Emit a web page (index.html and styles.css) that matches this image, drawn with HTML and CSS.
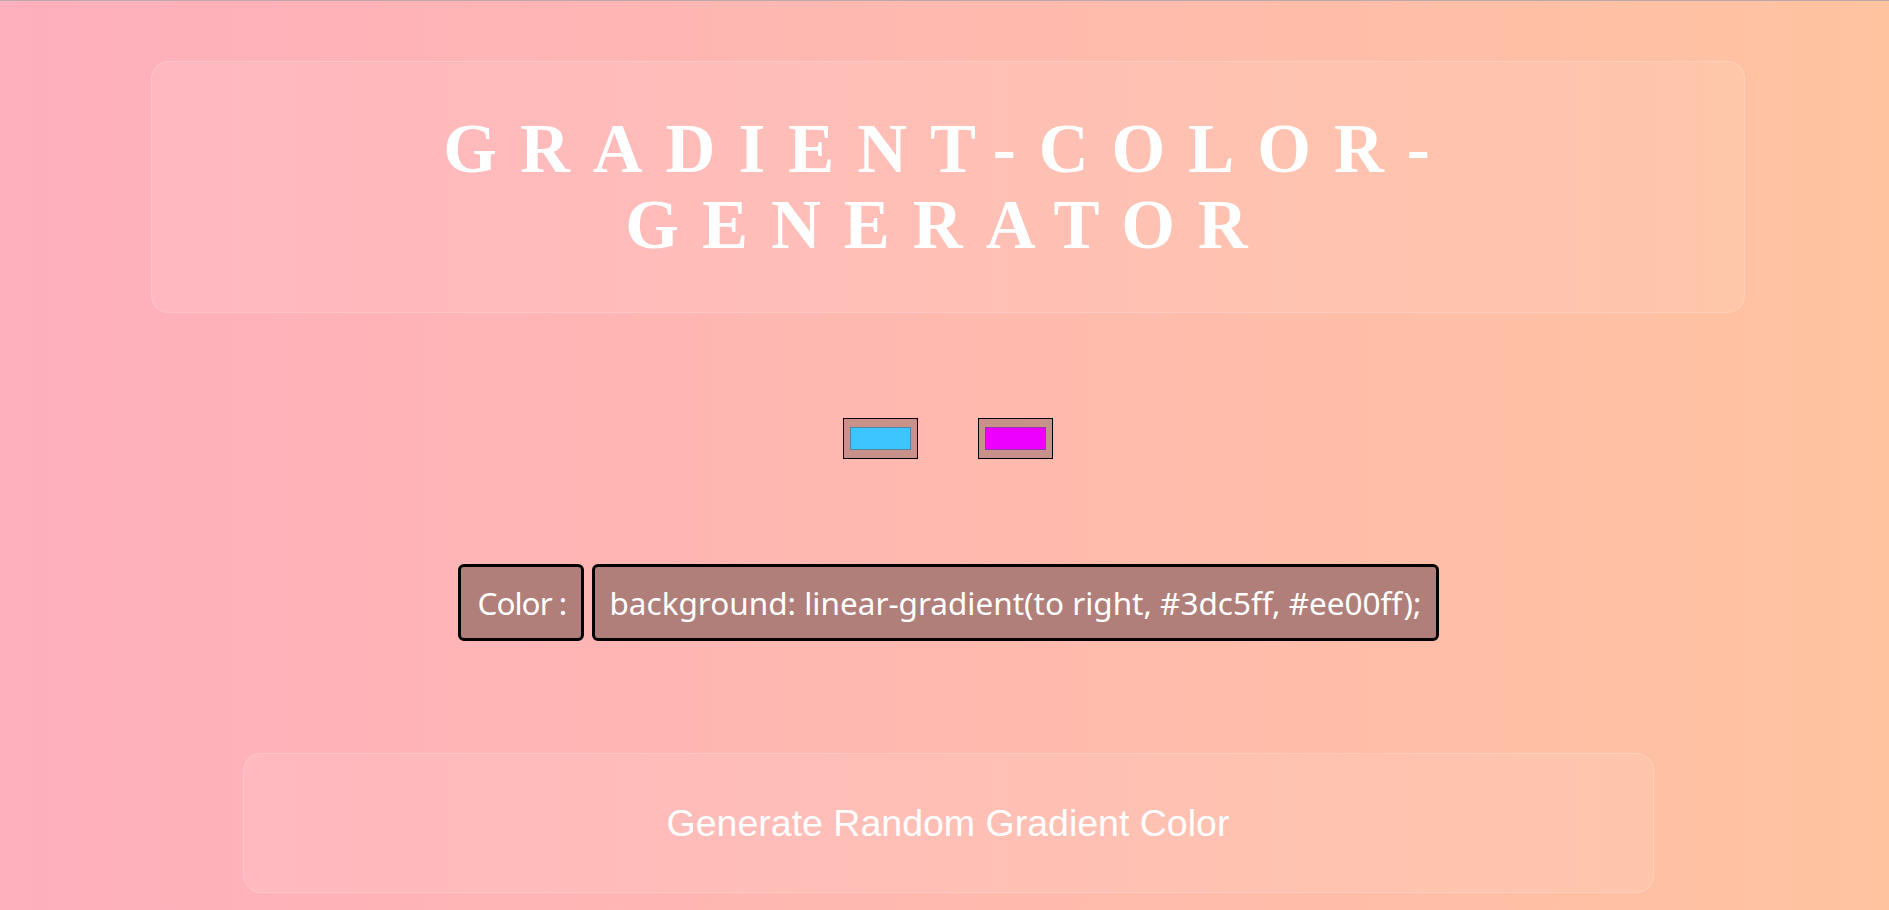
FILE: index.html
```html
<!DOCTYPE html>
<html lang="en">
<head>
<meta charset="utf-8">
<title>Gradient Color Generator</title>
<link rel="stylesheet" href="styles.css">
</head>
<body>
  <main class="page">
    <header class="title-card">
      <h1 class="title">Gradient-Color-Generator</h1>
    </header>

    <section class="pickers">
      <div class="picker"><span class="swatch swatch-a"></span></div>
      <div class="picker"><span class="swatch swatch-b"></span></div>
    </section>

    <section class="code-row">
      <div class="code-box code-label">Color :</div>
      <div class="code-box code-value">background: linear-gradient(to right, #3dc5ff, #ee00ff);</div>
    </section>

    <button class="generate" type="button">Generate Random Gradient Color</button>
  </main>
</body>
</html>
```

FILE: styles.css
```css
html {
  border-top: 1px solid #bba9ac;
}

body {
  margin: 0;
  min-height: 909px;
  background: linear-gradient(to right, #ffafbd, #ffc3a0);
  font-family: "Liberation Sans", Arial, sans-serif;
  color: #fff;
}

.page {
  display: flex;
  flex-direction: column;
  align-items: center;
  padding-top: 60px;
  padding-left: 7px;
}

.title-card {
  box-sizing: border-box;
  width: 1594px;
  height: 252px;
  display: flex;
  align-items: center;
  justify-content: center;
  background: rgba(255, 255, 255, 0.09);
  border: 1px solid rgba(255, 255, 255, 0.18);
  border-radius: 18px;
}

.title {
  margin: 0;
  max-width: 1300px;
  font-family: "Liberation Serif", "Times New Roman", serif;
  font-weight: bold;
  font-size: 69px;
  line-height: 76px;
  letter-spacing: 23px;
  text-transform: uppercase;
  text-align: center;
  color: #fff;
}

.pickers {
  display: flex;
  gap: 60px;
  margin-top: 105px;
}

.picker {
  display: block;
  padding: 8px 6px;
  background: #c8928b;
  border: 1px solid #000;
}

.swatch {
  display: block;
  box-sizing: border-box;
  width: 61px;
  height: 23px;
  border: 1px solid rgba(90, 90, 110, 0.6);
}

.swatch-a { background: #3dc5ff; }
.swatch-b { background: #ee00ff; }

.code-row {
  display: flex;
  gap: 8px;
  margin-top: 105px;
}

.code-box {
  box-sizing: border-box;
  height: 77px;
  display: flex;
  align-items: center;
  background: #b07f7a;
  border: 3px solid #000;
  border-radius: 6px;
  font-family: "Noto Sans", "DejaVu Sans", sans-serif;
  font-size: 31.5px;
  color: #fff;
  white-space: nowrap;
}

.code-label {
  width: 126px;
  padding: 0 0 0 17px;
  letter-spacing: -1px;
}

.code-value {
  width: 847px;
  padding: 0 0 0 15px;
}

.generate {
  box-sizing: border-box;
  width: 1411px;
  height: 140px;
  margin-top: 112px;
  background: rgba(255, 255, 255, 0.09);
  border: 1px solid rgba(255, 255, 255, 0.18);
  border-radius: 18px;
  font-family: "Liberation Sans", Arial, sans-serif;
  font-size: 37.5px;
  color: #fff;
  cursor: pointer;
}
```
